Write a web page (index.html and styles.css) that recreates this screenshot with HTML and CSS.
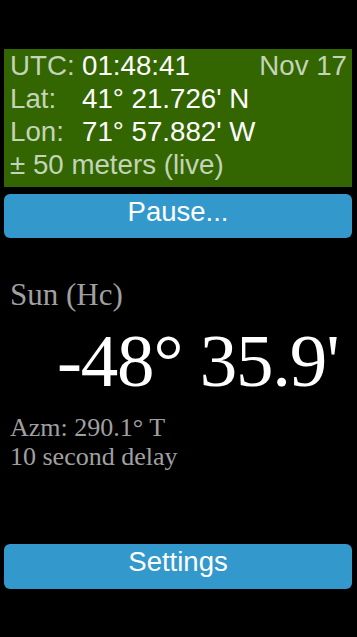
FILE: index.html
```html
<!DOCTYPE html>
<html>
<head>
<meta charset="utf-8">
<link rel="stylesheet" href="styles.css">
</head>
<body>
<div class="app">
  <div class="gps">
    <div class="row">
      <span class="lbl">UTC:</span><span class="val">01:48:41</span><span class="date">Nov 17</span>
    </div>
    <div class="row">
      <span class="lbl">Lat:</span><span class="val">41° 21.726' N</span>
    </div>
    <div class="row">
      <span class="lbl">Lon:</span><span class="val">71° 57.882' W</span>
    </div>
    <div class="row acc">± 50 meters (live)</div>
  </div>
  <div class="btn">Pause...</div>
  <div class="sight">
    <div class="body-name">Sun (Hc)</div>
    <div class="hc">-48° 35.9'</div>
    <div class="info first">Azm: 290.1° T</div>
    <div class="info">10 second delay</div>
  </div>
  <div class="btn">Settings</div>
</div>
</body>
</html>
```
FILE: styles.css
```css
html, body {
  margin: 0;
  padding: 0;
  background: #000;
}
.app {
  width: 357px;
  height: 637px;
  padding: 49px 5px 0 4px;
  box-sizing: border-box;
  display: flex;
  flex-direction: column;
}
.gps {
  background: #336600;
  padding: 0 5px 6px 6px;
  font-family: "Liberation Sans", Arial, sans-serif;
  font-size: 27.7px;
  line-height: 33px;
  color: #fff;
}
.row {
  display: flex;
  white-space: nowrap;
}
.lbl {
  width: 72px;
  color: #c4d4b8;
}
.val {
  color: #fff;
}
.date {
  margin-left: auto;
  color: #c4d4b8;
}
.acc {
  color: #c4d4b8;
}
.btn {
  margin-top: 7px;
  height: 44px;
  box-sizing: border-box;
  padding-bottom: 8px;
  background: #3399cc;
  border-radius: 6px;
  color: #fff;
  font-family: "Liberation Sans", Arial, sans-serif;
  font-size: 27.5px;
  line-height: 36px;
  text-align: center;
}
.sight {
  flex: 1;
  padding: 40px 0 0 6px;
  font-family: "Liberation Serif", "Times New Roman", serif;
  color: #a0a0a0;
}
.body-name {
  font-size: 31px;
  line-height: 34px;
}
.hc {
  color: #fff;
  font-size: 75px;
  letter-spacing: -1.2px;
  line-height: 80px;
  padding-left: 47px;
  margin-top: 9px;
  white-space: nowrap;
}
.info {
  font-size: 26px;
  line-height: 29px;
}
.info.first {
  margin-top: 12px;
}
.app > .btn:last-child {
  margin-top: 0;
  margin-bottom: 48px;
  height: 45px;
}
```
